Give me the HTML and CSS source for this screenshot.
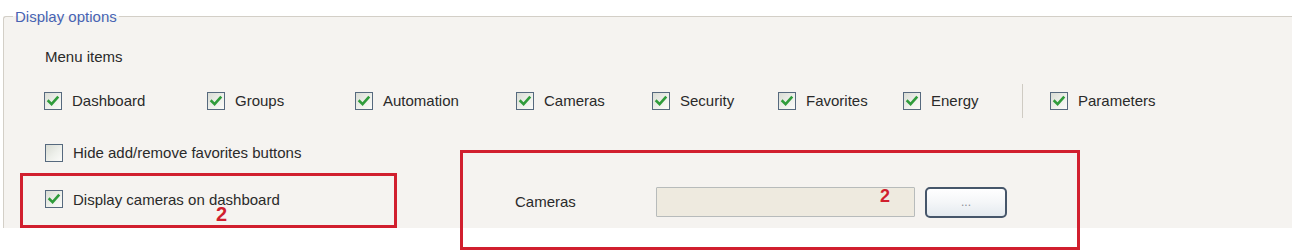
FILE: index.html
```html
<!DOCTYPE html>
<html lang="en">
<head>
<meta charset="utf-8">
<title>Display options</title>
<link rel="stylesheet" href="styles.css">
</head>
<body>
<svg class="defs" width="0" height="0" aria-hidden="true">
  <defs>
    <symbol id="tick" viewBox="0 0 16 16">
      <path d="M3.6 8.2 L6.6 11.2 L12.4 4.6" fill="none" stroke="#2f9c3b" stroke-width="2.6" stroke-linecap="square" stroke-linejoin="miter"/>
    </symbol>
  </defs>
</svg>
<fieldset class="group">
  <legend class="group-title">Display options</legend>
  <div class="group-body">
    <div class="section-label">Menu items</div>
    <div class="menu-grid">
      <label class="check"><span class="box"><svg class="tick"><use href="#tick"/></svg></span><span class="check-text">Dashboard</span></label>
      <label class="check"><span class="box"><svg class="tick"><use href="#tick"/></svg></span><span class="check-text">Groups</span></label>
      <label class="check"><span class="box"><svg class="tick"><use href="#tick"/></svg></span><span class="check-text">Automation</span></label>
      <label class="check"><span class="box"><svg class="tick"><use href="#tick"/></svg></span><span class="check-text">Cameras</span></label>
      <label class="check"><span class="box"><svg class="tick"><use href="#tick"/></svg></span><span class="check-text">Security</span></label>
      <label class="check"><span class="box"><svg class="tick"><use href="#tick"/></svg></span><span class="check-text">Favorites</span></label>
      <label class="check"><span class="box"><svg class="tick"><use href="#tick"/></svg></span><span class="check-text">Energy</span></label>
      <span class="sep"></span>
      <label class="check"><span class="box"><svg class="tick"><use href="#tick"/></svg></span><span class="check-text">Parameters</span></label>
    </div>
    <div class="bottom">
      <div class="left-col">
        <label class="check row"><span class="box"></span><span class="check-text">Hide add/remove favorites buttons</span></label>
        <div class="mark mark-left">
          <label class="check tight"><span class="box"><svg class="tick"><use href="#tick"/></svg></span><span class="check-text">Display cameras on dashboard</span></label>
          <span class="mark-num num-1">2</span>
        </div>
      </div>
      <div class="mark mark-right">
        <div class="field-row">
          <span class="field-label">Cameras</span>
          <span class="textbox"></span>
          <button class="browse" type="button">...</button>
        </div>
        <span class="mark-num num-2">2</span>
      </div>
    </div>
  </div>
</fieldset>
</body>
</html>
```
FILE: styles.css
```css
html, body {
  margin: 0;
  padding: 0;
  background: #ffffff;
}

body {
  font-family: "Liberation Sans", Arial, sans-serif;
  font-size: 15px;
  color: #2a2a2a;
  width: 1293px;
  height: 251px;
  overflow: hidden;
}

.defs {
  position: absolute;
  width: 0;
  height: 0;
}

.group {
  margin: 8px 1px 0 3px;
  padding: 0;
  border: 1px solid #d3cfc7;
  border-right: none;
  border-bottom: none;
  border-top-left-radius: 3px;
  background: #f5f3f0;
  min-width: 0;
}

.group-title {
  margin-left: 9px;
  padding: 0 2px;
  color: #4763b3;
  font-size: 15px;
  line-height: 17px;
}

.group-body {
  padding-left: 16px;
}

.section-label {
  margin-top: 23px;
  padding-left: 25px;
  line-height: 18px;
  height: 18px;
}

.menu-grid {
  margin-top: 18px;
  margin-left: 24px;
  display: grid;
  grid-template-columns: 163px 148px 161px 136px 126px 125px 119px 28px auto;
  align-items: center;
  height: 20px;
}

.check {
  display: flex;
  align-items: center;
  gap: 10px;
  height: 20px;
  line-height: 18px;
  white-space: nowrap;
}

.check.tight {
  line-height: 15px;
}

.box {
  width: 18px;
  height: 18px;
  box-sizing: border-box;
  border: 1px solid #56697e;
  background: linear-gradient(135deg, #d9dcd4 0%, #eef0eb 55%, #fbfbf9 100%);
  display: flex;
  align-items: center;
  justify-content: center;
  flex: none;
}

.tick {
  width: 16px;
  height: 16px;
}

.sep {
  width: 1px;
  height: 34px;
  background: #cfcbc3;
  justify-self: start;
}

.bottom {
  margin-top: 39px;
  height: 85px;
  display: flex;
  align-items: flex-start;
}

.left-col {
  width: 377px;
  display: flex;
  flex-direction: column;
  gap: 10px;
}

.row {
  padding-left: 25px;
}

.mark {
  border: 3px solid #d11f2e;
  box-sizing: border-box;
  position: relative;
}

.mark-left {
  width: 377px;
  height: 55px;
  padding: 13px 0 0 22px;
}

.mark-right {
  margin-left: 63px;
  margin-top: 7px;
  width: 620px;
  height: 100px;
  padding: 33px 0 0 52px;
  flex: none;
}

.mark-num {
  position: absolute;
  color: #d11f2e;
  font-weight: bold;
}

.num-1 {
  left: 193px;
  top: 31px;
  font-size: 20px;
  line-height: 15px;
}

.num-2 {
  left: 417px;
  top: 34px;
  font-size: 18px;
  line-height: 18px;
}

.field-row {
  display: flex;
  align-items: center;
  height: 32px;
}

.field-label {
  width: 141px;
  line-height: 18px;
}

.textbox {
  width: 259px;
  height: 30px;
  box-sizing: border-box;
  border: 1px solid #b7bbbb;
  border-radius: 1px;
  background: #eeeadf;
}

.browse {
  margin-left: 10px;
  width: 82px;
  height: 31px;
  box-sizing: border-box;
  border: 2px solid #46566a;
  border-radius: 5px;
  background: linear-gradient(180deg, #ffffff 0%, #f4f6f8 50%, #e4eaef 100%);
  font-family: "Liberation Sans", Arial, sans-serif;
  font-size: 12px;
  color: #8a8f96;
  padding: 0;
  line-height: 27px;
}
```
